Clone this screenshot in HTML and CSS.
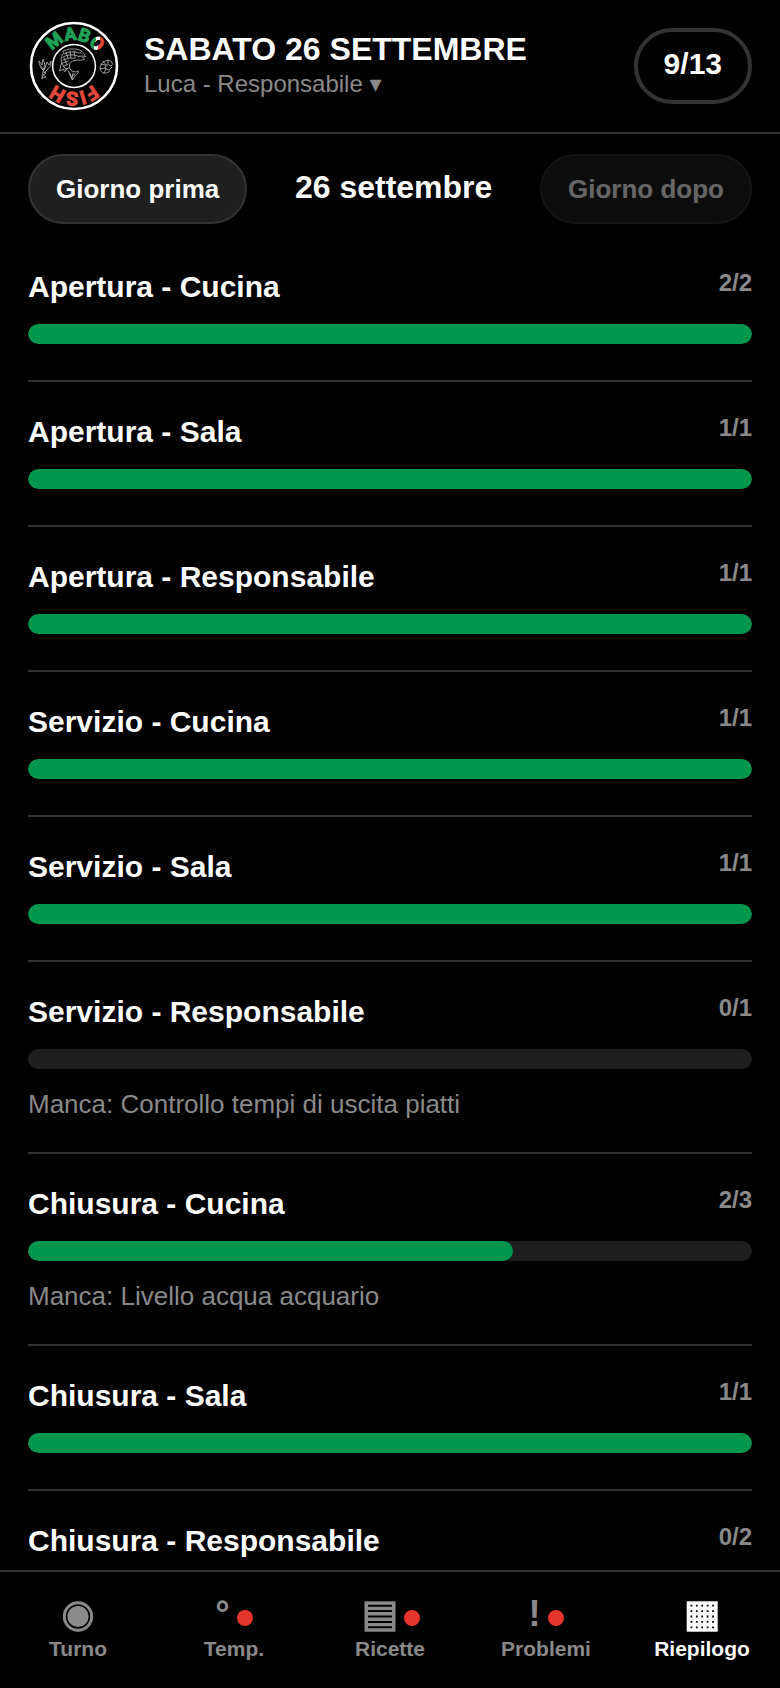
FILE: index.html
```html
<!DOCTYPE html>
<html lang="it">
<head>
<meta charset="utf-8">
<meta name="viewport" content="width=device-width, initial-scale=1">
<title>Mabo Fish - Riepilogo</title>
<link rel="stylesheet" href="styles.css">
</head>
<body>
<div class="app">
  <header class="header">
    <svg class="logo" viewBox="0 0 92 92" role="img" aria-label="Mabo Fish">
      <defs>
        <path id="arc-top" d="M20 46a26 26 0 0 1 52 0"/>
        <path id="arc-bottom" d="M72 46a26 26 0 0 1 -52 0"/>
        <linearGradient id="flag" gradientUnits="userSpaceOnUse" x1="63" y1="22" x2="77" y2="25">
          <stop offset=".3" stop-color="#1fa256"/><stop offset=".3" stop-color="#fff"/>
          <stop offset=".55" stop-color="#fff"/><stop offset=".55" stop-color="#e2493c"/>
        </linearGradient>
      </defs>
      <circle cx="46" cy="46" r="43" fill="none" stroke="#fff" stroke-width="2.6"/>
      <circle cx="46" cy="46" r="21.4" fill="none" stroke="#fff" stroke-width="1.5"/>
      <text class="logo-text logo-top" fill="url(#flag)" stroke="url(#flag)"><textPath href="#arc-top" startOffset="51%">MABO</textPath></text>
      <text class="logo-text logo-bottom" fill="#e2493c" stroke="#e2493c"><textPath href="#arc-bottom" startOffset="50%">FISH</textPath></text>
      <g fill="none" stroke="#bdbdbd" stroke-width=".8" stroke-linecap="round" stroke-linejoin="round">
        <path d="M35 31q6-3 13-2 7 1 9.500 7.500l-3 .5 2 2.500q-4 1-7 .5-6 0-8 4-1 4 2 7l4 1 3-1q0 3-3 4l-3 5-3-6-1-3q-6-4-7-9-1-6 2-9z"/>
        <path d="M36 34q8-4 15-1M35 37q7-4 15-1M35 40q6-3 12-2M35 43l5-2M36 46l4-2M37 49l4-1M52 32.500l1 .5M50 36.500l5-.5M38 32l2 6M42 31l1 7M46 31l1 6M33.500 43l-2 8 4-2 1 3 2-3M42 53l2 6M45 53l-1 6M47 54l-3 2M36 38l3 7"/>
        <path d="M14 59q0-6 2-10M16 49q-5-2-5-8l3 4 1-6q3 5 1 10M16 50q2-4 3-8l2 3 2-4q1 5-3 8l-3 3M15 52l3 1-3 2 3 2-4 1M12 47l3 3"/>
        <path d="M84 47l-3 3-3-1q-2-2 0-4 3-1 5 1 2-1 1-4-3-3-7-1-4 2-5 6 0 4 3 6 4 1 7-2M73 44l4 1M75 41l3 4M80 40l0 4M72 49l5-1M76 53l2-4"/>
      </g>
    </svg>
    <div class="heading">
      <h1 class="title">SABATO 26 SETTEMBRE</h1>
      <button class="user" type="button">Luca - Responsabile ▾</button>
    </div>
    <button class="score" type="button">9/13</button>
  </header>

  <div class="days">
    <button class="day-btn" type="button">Giorno prima</button>
    <p class="day">26 settembre</p>
    <button class="day-btn" type="button" disabled>Giorno dopo</button>
  </div>

  <main class="list">
    <section class="item">
      <div class="row"><h2 class="name">Apertura - Cucina</h2><span class="count">2/2</span></div>
      <div class="bar"><div class="fill" style="width:100%"></div></div>
    </section>
    <section class="item">
      <div class="row"><h2 class="name">Apertura - Sala</h2><span class="count">1/1</span></div>
      <div class="bar"><div class="fill" style="width:100%"></div></div>
    </section>
    <section class="item">
      <div class="row"><h2 class="name">Apertura - Responsabile</h2><span class="count">1/1</span></div>
      <div class="bar"><div class="fill" style="width:100%"></div></div>
    </section>
    <section class="item">
      <div class="row"><h2 class="name">Servizio - Cucina</h2><span class="count">1/1</span></div>
      <div class="bar"><div class="fill" style="width:100%"></div></div>
    </section>
    <section class="item">
      <div class="row"><h2 class="name">Servizio - Sala</h2><span class="count">1/1</span></div>
      <div class="bar"><div class="fill" style="width:100%"></div></div>
    </section>
    <section class="item">
      <div class="row"><h2 class="name">Servizio - Responsabile</h2><span class="count">0/1</span></div>
      <div class="bar"><div class="fill" style="width:0%"></div></div>
      <p class="missing">Manca: Controllo tempi di uscita piatti</p>
    </section>
    <section class="item">
      <div class="row"><h2 class="name">Chiusura - Cucina</h2><span class="count">2/3</span></div>
      <div class="bar"><div class="fill" style="width:67%"></div></div>
      <p class="missing">Manca: Livello acqua acquario</p>
    </section>
    <section class="item">
      <div class="row"><h2 class="name">Chiusura - Sala</h2><span class="count">1/1</span></div>
      <div class="bar"><div class="fill" style="width:100%"></div></div>
    </section>
    <section class="item">
      <div class="row"><h2 class="name">Chiusura - Responsabile</h2><span class="count">0/2</span></div>
      <div class="bar"><div class="fill" style="width:0%"></div></div>
    </section>
  </main>

  <nav class="tabs">
    <button class="tab" type="button">
      <span class="glyph"><svg class="icon" viewBox="0 0 36 31" aria-hidden="true"><circle cx="18" cy="15.500" r="13.700" fill="none" stroke="currentColor" stroke-width="3"/><circle cx="18" cy="15.500" r="10.600" fill="currentColor"/></svg></span>
      <span>Turno</span>
    </button>
    <button class="tab" type="button"><span class="glyph">°<i class="dot"></i></span><span>Temp.</span></button>
    <button class="tab" type="button">
      <span class="glyph"><svg class="icon" viewBox="0 0 36 31" aria-hidden="true"><path fill="currentColor" d="M3.500 .3h31v30.400h-31z"/><path stroke="#000" stroke-width="2" d="M7 4.700h24M7 10.100h24M7 15.500h24M7 20.900h24M7 26.300h24"/></svg><i class="dot"></i></span>
      <span>Ricette</span>
    </button>
    <button class="tab" type="button"><span class="glyph">!<i class="dot"></i></span><span>Problemi</span></button>
    <button class="tab active" type="button" aria-current="page">
      <span class="glyph"><svg class="icon" viewBox="0 0 36 31" aria-hidden="true"><path fill="currentColor" d="M2.700 .3h31v30.400h-31z"/><path stroke="#000" stroke-width="1.800" stroke-dasharray="1.800 3.600" d="M6.500 4.700h25M6.500 10.100h25M6.500 15.500h25M6.500 20.900h25M6.500 26.300h25"/></svg></span>
      <span>Riepilogo</span>
    </button>
  </nav>
</div>
</body>
</html>
```
FILE: styles.css
```css
:root {
  --bg: #000;
  --panel: #1f1f1f;
  --line: #333;
  --muted: #8a8a8a;
  --green: #00964b;
  --red: #e5352d;
}

* { box-sizing: border-box; }

body {
  margin: 0;
  background: var(--bg);
  color: #fff;
  font-family: "Liberation Sans", "DejaVu Sans", sans-serif;
}

h1, h2, p { margin: 0; }

button {
  margin: 0;
  padding: 0;
  border: 0;
  background: none;
  color: inherit;
  font-family: inherit;
}

.app {
  display: flex;
  flex-direction: column;
  height: 100vh;
}

.header {
  display: flex;
  align-items: center;
  padding: 20px 28px;
  border-bottom: 2px solid var(--line);
}

.logo { width: 92px; height: 92px; flex: none; }

.logo-text {
  font-family: Roboto, sans-serif;
  font-weight: 700;
  text-anchor: middle;
  stroke-width: 1px;
}

.logo-top { font-size: 18px; }
.logo-bottom { font-size: 19px; }

.heading {
  flex: 1;
  display: flex;
  flex-direction: column;
  align-items: flex-start;
  gap: 2px;
  padding: 0 24px;
}

.title { font-size: 32px; line-height: 34px; }

.user {
  color: var(--muted);
  font-size: 24px;
  line-height: 32px;
}

.score {
  padding: 15px 26px 19px;
  border: 4px solid var(--line);
  border-radius: 38px;
  font-size: 30px;
  line-height: 34px;
  font-weight: 700;
}

.days {
  display: flex;
  align-items: center;
  justify-content: space-between;
  padding: 20px 28px 13px;
}

.day-btn {
  padding: 18px 26px;
  border: 2px solid var(--line);
  border-radius: 35px;
  background: var(--panel);
  font-size: 26px;
  line-height: 30px;
  font-weight: 700;
}

.day-btn:disabled { opacity: .4; }

.day {
  padding-bottom: 4px;
  font-size: 32px;
  line-height: 36px;
  font-weight: 700;
}

.list {
  flex: 1;
  min-height: 0;
  overflow-y: auto;
  scrollbar-width: none;
  padding: 0 28px;
}

.item {
  padding: 32px 0;
  border-bottom: 2px solid var(--line);
}

.row {
  display: flex;
  justify-content: space-between;
  align-items: flex-start;
  margin-bottom: 20px;
}

.name { font-size: 30px; line-height: 35px; }

.count {
  color: var(--muted);
  font-size: 24px;
  line-height: 27px;
  font-weight: 700;
}

.bar {
  height: 20px;
  margin-bottom: 4px;
  border-radius: 10px;
  background: var(--panel);
  overflow: hidden;
}

.fill {
  height: 100%;
  border-radius: 10px;
  background: var(--green);
}

.missing {
  padding-top: 16px;
  color: var(--muted);
  font-size: 26px;
  line-height: 31px;
}

.tabs {
  display: grid;
  grid-template-columns: repeat(5, 1fr);
  border-top: 2px solid var(--line);
  background: var(--bg);
}

.tab {
  display: flex;
  flex-direction: column;
  align-items: center;
  gap: 2px;
  padding: 22px 0 26px;
  color: var(--muted);
  font-size: 21px;
  line-height: 26px;
  font-weight: 700;
}

.tab.active { color: #fff; }

.glyph {
  height: 40px;
  font-size: 36px;
  line-height: 40px;
}

.icon {
  width: 36px;
  height: 31px;
  vertical-align: -6px;
}

.dot {
  display: inline-block;
  width: 16px;
  height: 16px;
  margin-left: 7px;
  border-radius: 50%;
  background: var(--red);
}
```
